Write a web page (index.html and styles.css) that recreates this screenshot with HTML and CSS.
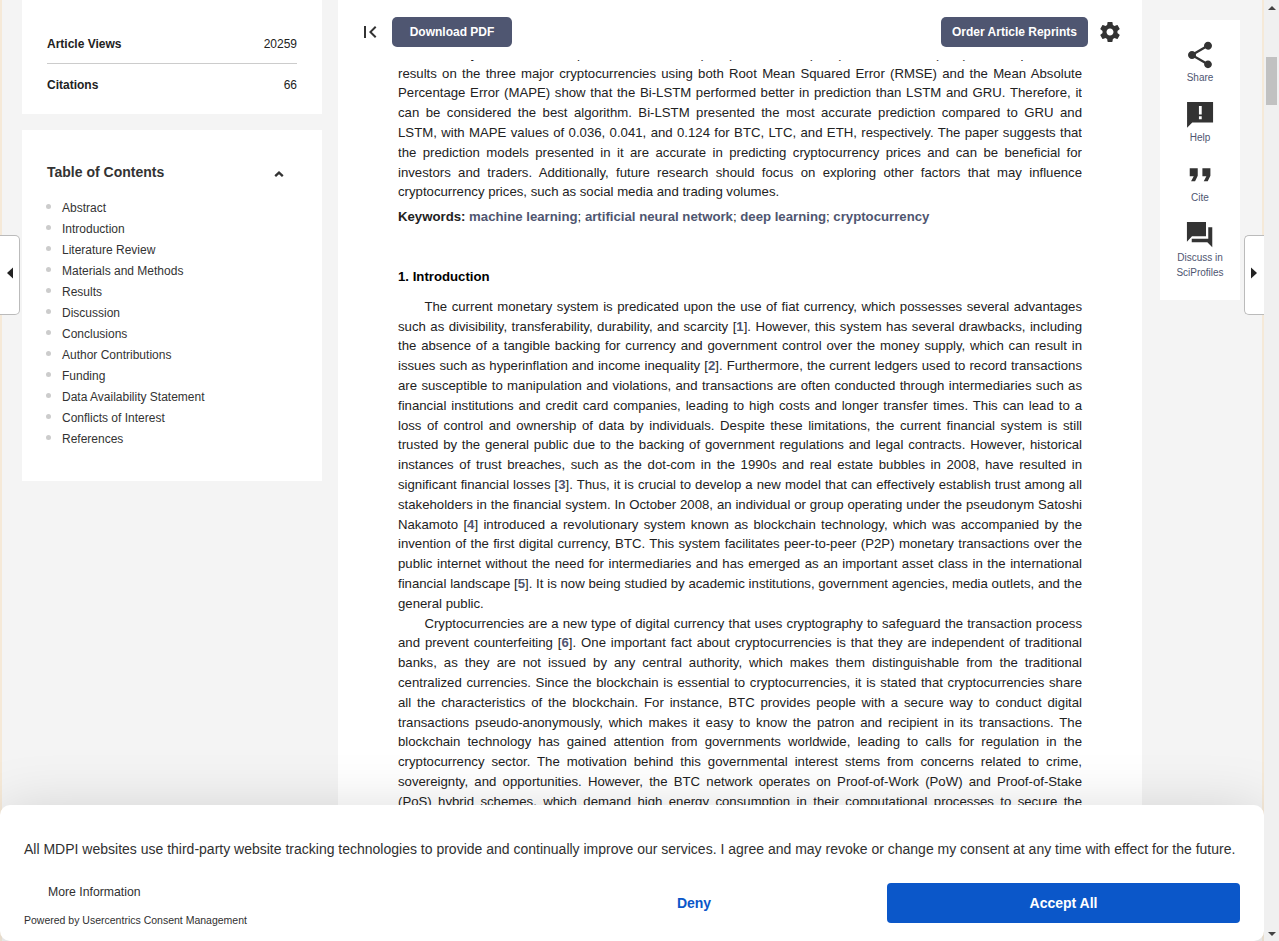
FILE: index.html
```html
<!DOCTYPE html>
<html lang="en">
<head>
<meta charset="utf-8">
<title>Article</title>
<link rel="stylesheet" href="styles.css">
</head>
<body>
<div class="window">
<div class="page">
  <aside class="sidebar">
    <section class="card metrics">
      <div class="metric"><b>Article Views</b><span>20259</span></div>
      <div class="metric"><b>Citations</b><span>66</span></div>
    </section>
    <section class="card toc">
      <div class="toc-head"><h2>Table of Contents</h2>
        <svg width="10" height="6" viewBox="0 0 10 6"><path d="M1.2 5.2L5 1.6L8.800 5.2" fill="none" stroke="#333" stroke-width="2.300"/></svg>
      </div>
      <ul>
        <li>Abstract</li><li>Introduction</li><li>Literature Review</li><li>Materials and Methods</li><li>Results</li><li>Discussion</li><li>Conclusions</li><li>Author Contributions</li><li>Funding</li><li>Data Availability Statement</li><li>Conflicts of Interest</li><li>References</li>
      </ul>
    </section>
  </aside>
  <main class="article">
    <header class="toolbar">
      <svg class="first" width="24" height="24" viewBox="0 0 24 24" fill="#333"><path d="M18.41 16.59L13.82 12l4.59-4.59L17 6l-6 6 6 6zM6 6h2v12H6z"/></svg>
      <a class="btn download">Download PDF</a>
      <a class="btn reprints">Order Article Reprints</a>
      <svg class="gear" width="24" height="24" viewBox="0 0 24 24" fill="#333"><path d="M19.43 12.98c.04-.32.07-.64.07-.98s-.03-.66-.07-.98l2.11-1.65c.19-.15.24-.42.12-.64l-2-3.46c-.12-.22-.39-.3-.61-.22l-2.49 1c-.52-.4-1.08-.73-1.69-.98l-.38-2.65C14.46 2.18 14.25 2 14 2h-4c-.25 0-.46.18-.49.42l-.38 2.65c-.61.25-1.17.59-1.69.98l-2.49-1c-.23-.09-.49 0-.61.22l-2 3.46c-.13.22-.07.49.12.64l2.11 1.65c-.04.32-.07.65-.07.98s.03.66.07.98l-2.11 1.65c-.19.15-.24.42-.12.64l2 3.46c.12.22.39.3.61.22l2.49-1c.52.4 1.08.73 1.69.98l.38 2.65c.03.24.24.42.49.42h4c.25 0 .46-.18.49-.42l.38-2.65c.61-.25 1.17-.59 1.69-.98l2.49 1c.23.09.49 0 .61-.22l2-3.46c.12-.22.07-.49-.12-.64l-2.11-1.65zM12 15.5c-1.93 0-3.5-1.57-3.5-3.5s1.57-3.5 3.5-3.5 3.5 1.57 3.5 3.5-1.57 3.5-3.5 3.5z"/></svg>
    </header>
    <div class="text">
      <div class="clip">
      <p class="abstract">measured by their market capitalization—Bitcoin (BTC), Ethereum (ETH), and Litecoin (LTC). The experimental results on the three major cryptocurrencies using both Root Mean Squared Error (RMSE) and the Mean Absolute Percentage Error (MAPE) show that the Bi-LSTM performed better in prediction than LSTM and GRU. Therefore, it can be considered the best algorithm. Bi-LSTM presented the most accurate prediction compared to GRU and LSTM, with MAPE values of 0.036, 0.041, and 0.124 for BTC, LTC, and ETH, respectively. The paper suggests that the prediction models presented in it are accurate in predicting cryptocurrency prices and can be beneficial for investors and traders. Additionally, future research should focus on exploring other factors that may influence cryptocurrency prices, such as social media and trading volumes.</p>
      </div>
      <p class="keywords"><b>Keywords:</b> <a>machine learning</a>; <a>artificial neural network</a>; <a>deep learning</a>; <a>cryptocurrency</a></p>
      <h3>1. Introduction</h3>
      <p class="body">The current monetary system is predicated upon the use of fiat currency, which possesses several advantages such as divisibility, transferability, durability, and scarcity [<a>1</a>]. However, this system has several drawbacks, including the absence of a tangible backing for currency and government control over the money supply, which can result in issues such as hyperinflation and income inequality [<a>2</a>]. Furthermore, the current ledgers used to record transactions are susceptible to manipulation and violations, and transactions are often conducted through intermediaries such as financial institutions and credit card companies, leading to high costs and longer transfer times. This can lead to a loss of control and ownership of data by individuals. Despite these limitations, the current financial system is still trusted by the general public due to the backing of government regulations and legal contracts. However, historical instances of trust breaches, such as the dot-com in the 1990s and real estate bubbles in 2008, have resulted in significant financial losses [<a>3</a>]. Thus, it is crucial to develop a new model that can effectively establish trust among all stakeholders in the financial system. In October 2008, an individual or group operating under the pseudonym Satoshi Nakamoto [<a>4</a>] introduced a revolutionary system known as blockchain technology, which was accompanied by the invention of the first digital currency, BTC. This system facilitates peer-to-peer (P2P) monetary transactions over the public internet without the need for intermediaries and has emerged as an important asset class in the international financial landscape [<a>5</a>]. It is now being studied by academic institutions, government agencies, media outlets, and the general public.</p>
      <p class="body">Cryptocurrencies are a new type of digital currency that uses cryptography to safeguard the transaction process and prevent counterfeiting [<a>6</a>]. One important fact about cryptocurrencies is that they are independent of traditional banks, as they are not issued by any central authority, which makes them distinguishable from the traditional centralized currencies. Since the blockchain is essential to cryptocurrencies, it is stated that cryptocurrencies share all the characteristics of the blockchain. For instance, BTC provides people with a secure way to conduct digital transactions pseudo-anonymously, which makes it easy to know the patron and recipient in its transactions. The blockchain technology has gained attention from governments worldwide, leading to calls for regulation in the cryptocurrency sector. The motivation behind this governmental interest stems from concerns related to crime, sovereignty, and opportunities. However, the BTC network operates on Proof-of-Work (PoW) and Proof-of-Stake (PoS) hybrid schemes, which demand high energy consumption in their computational processes to secure the network.</p>
    </div>
  </main>
  <nav class="tools">
    <a><svg width="32" height="32" viewBox="0 0 24 24" fill="#333"><path d="M18 16.08c-.76 0-1.44.3-1.96.77L8.91 12.7c.05-.23.09-.46.09-.7s-.04-.47-.09-.7l7.05-4.11c.54.5 1.25.81 2.04.81 1.66 0 3-1.34 3-3s-1.34-3-3-3-3 1.34-3 3c0 .24.04.47.09.7L8.04 9.81C7.5 9.31 6.79 9 6 9c-1.66 0-3 1.34-3 3s1.34 3 3 3c.79 0 1.5-.31 2.04-.81l7.12 4.16c-.05.21-.08.43-.08.65 0 1.61 1.31 2.92 2.92 2.92s2.92-1.31 2.92-2.92-1.31-2.92-2.92-2.92z"/></svg><span>Share</span></a>
    <a><svg width="32" height="32" viewBox="0 0 24 24" fill="#333"><path d="M2.3 2.3H21.800V17.600H6.200L2.300 21.500zM11.200 5.200v6.500h2.100v-6.500zM11.200 13v2.100h2.100V13z" fill-rule="evenodd"/></svg><span>Help</span></a>
    <a><svg width="32" height="32" viewBox="0 0 24 24" fill="#333"><path d="M5.300 16.600h3l2-4V7h-6v6h3zM14.800 16.600h3l2-4V7h-6v6h3z"/></svg><span>Cite</span></a>
    <a><svg width="32" height="32" viewBox="0 0 24 24" fill="#333"><path d="M21.200 6.200h-3v8.600H5.800v2.700h11.700l3.700 3.700zM16.500 2.200H2.200V17l3.800-4h10.500z"/></svg><span>Discuss in<br>SciProfiles</span></a>
  </nav>
</div>
<div class="scrollbar"><i class="up"></i><i class="thumb"></i><i class="down"></i></div>
<div class="pull left"><svg width="6" height="12" viewBox="0 0 6 12"><path d="M6 .5v11L0 6z"/></svg></div>
<div class="pull right"><svg width="6" height="12" viewBox="0 0 6 12"><path d="M0 .5v11l6-5.500z"/></svg></div>
<div class="consent-layer">
  <section class="consent">
    <p class="message">All MDPI websites use third-party website tracking technologies to provide and continually improve our services. I agree and may revoke or change my consent at any time with effect for the future.</p>
    <div class="actions">
      <div class="links"><a class="more">More Information</a><span class="powered">Powered by Usercentrics Consent Management</span></div>
      <button class="deny">Deny</button>
      <button class="accept">Accept All</button>
    </div>
  </section>
</div>
</div>
</body>
</html>
```
FILE: styles.css
```css
* { box-sizing: border-box; }
body { margin: 0; overflow: hidden; font-family: "Liberation Sans", Arial, sans-serif; color: #222; }
p, h2, h3, ul { margin: 0; padding: 0; }
svg { display: block; flex: none; }
.window { position: relative; display: flex; width: 1279px; height: 941px; overflow: hidden; }
.page { display: flex; align-items: flex-start; width: 1264px; height: 941px; padding-left: 20px; background: #f4f4f4; border: solid #f5e9d8; border-width: 0 2px; overflow: hidden; }
.sidebar { width: 300px; margin-right: 16px; flex: none; }
.card { background: #fff; padding: 0 25px; }
.metrics { height: 114px; margin-bottom: 16px; padding-top: 24px; font-size: 12px; color: #222; }
.metric { display: flex; justify-content: space-between; align-items: center; height: 39px; padding-top: 1px; }
.metric + .metric { height: 42px; border-top: 1px solid #ccc; }
.toc { height: 351px; padding-top: 32px; color: #333; }
.toc-head { display: flex; align-items: center; justify-content: space-between; height: 20px; padding-right: 13px; }
.toc-head svg { margin-top: 3px; }
.toc h2 { font-size: 14px; line-height: 20px; }
.toc ul { list-style: none; margin-top: 16px; font-size: 12px; line-height: 21px; }
.toc li { display: flex; align-items: center; height: 21px; }
.toc li::before { content: ""; width: 5px; height: 5px; margin: -4px 11px 0 -1px; border-radius: 50%; background: #ccc; }
.article { width: 804px; height: 941px; flex: none; background: #fff; }
.toolbar { display: flex; align-items: center; height: 60px; padding: 4px 20px 0; }
.btn { display: flex; align-items: center; justify-content: center; height: 30px; border-radius: 5px; background: #4f5671; color: #fff; font-size: 12px; font-weight: bold; }
.download { width: 120px; margin-left: 10px; }
.reprints { width: 147px; margin-left: auto; }
.gear { margin-left: 10px; }
.text { padding: 0 60px; font-size: 13.200px; line-height: 19.800px; text-align: justify; }
.text a { color: #4f5671; font-weight: bold; }
.clip { overflow: hidden; }
.abstract { margin-top: -16.200px; }
.keywords { margin-top: 5px; }
.text h3 { margin: 40px 0 10px; font-size: 13.200px; color: #000; }
.body { text-indent: 2em; }
.tools { width: 80px; height: 280px; margin: 20px 0 0 18px; padding-top: 19px; background: #fff; }
.tools a { display: flex; flex-direction: column; align-items: center; height: 60px; line-height: 15px; text-align: center; color: #4f5671; }
.tools span { margin-top: -1px; font-size: 10px; }
.scrollbar { display: flex; flex-direction: column; align-items: center; width: 15px; height: 941px; padding: 6px 0 5px; background: #f0f0f0; }
.scrollbar .up, .scrollbar .down { width: 0; height: 0; border: solid transparent; border-width: 0 4px; }
.scrollbar .up { border-bottom: 4px solid #444; }
.scrollbar .down { margin-top: auto; border-top: 4px solid #444; }
.thumb { width: 11px; height: 48px; margin-top: 47px; background: #c1c1c1; }
.pull { position: absolute; top: 235px; display: flex; align-items: center; width: 20px; height: 80px; background: #fff; border: 1px solid #bbb; }
.pull svg { margin-top: -5px; fill: #222; }
.pull.left { left: 0; padding-left: 7px; border-left: 0; border-radius: 0 5px 5px 0; }
.pull.right { left: 1244px; padding-left: 6px; border-right: 0; border-radius: 5px 0 0 5px; }
.consent-layer { position: absolute; left: 0; bottom: 0; width: 1264px; height: 400px; display: flex; align-items: flex-end; overflow: hidden; }
.consent { width: 1264px; height: 136px; padding: 34px 24px 0; border-radius: 10px; background: #fff; box-shadow: 0 8px 60px rgba(0,0,0,.17); color: #303030; }
.message { font-size: 14px; line-height: 21px; white-space: nowrap; }
.actions { display: flex; align-items: flex-start; margin-top: 23px; }
.links { display: flex; flex-direction: column; width: 500px; }
.more { padding-left: 24px; font-size: 12.250px; line-height: 18px; }
.powered { margin-top: 11px; font-size: 10.500px; line-height: 16px; }
.consent button { height: 40px; border: 0; border-radius: 4px; font: bold 14px "Liberation Sans", Arial, sans-serif; }
.deny { width: 340px; background: transparent; color: #0b57c9; }
.accept { width: 353px; margin-left: 23px; background: #0b57c9; color: #fff; }
```
